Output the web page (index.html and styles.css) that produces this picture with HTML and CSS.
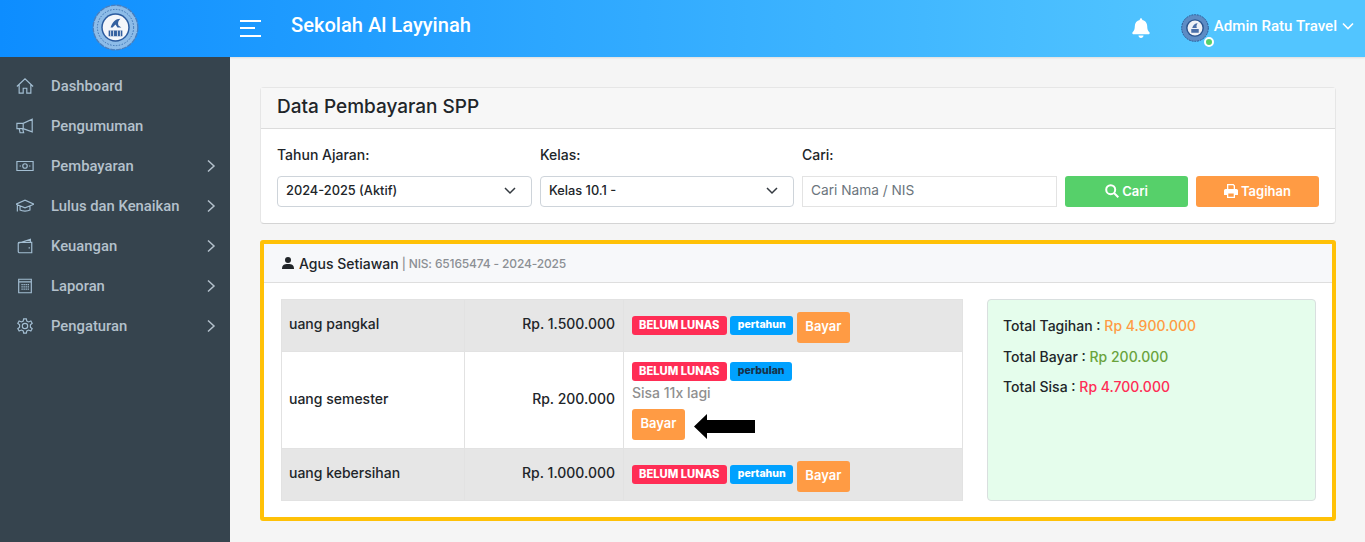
FILE: index.html
```html
<!DOCTYPE html>
<html lang="en">
<head>
    <meta charset="UTF-8">
    <meta name="viewport" content="width=device-width, initial-scale=1.0">
    <title>Sekolah Al Layyinah</title>
    <link rel="stylesheet" href="styles.css">
</head>
<body>

    <header class="topbar">
        <div class="brand">
            <svg class="logo" width="47" height="47" viewBox="0 0 48 48">
                <circle cx="24" cy="24" r="22.800" fill="#8dbce8" stroke="#4a7fbe" stroke-width="1.400" stroke-dasharray="5 1"/>
                <circle cx="24" cy="24" r="18.500" fill="none" stroke="#3a70b0" stroke-width="1" stroke-dasharray="1.500 1.500"/>
                <circle cx="24" cy="24" r="14.500" fill="#2a5a9e"/>
                <circle cx="24" cy="24" r="13" fill="#f4f6fa"/>
                <path d="M17 33v-6h14v6zM19 24c2-6 5-9 10-9-2 2-3 4-2 7l3 2h-4l-2-3-3 3z" fill="#34609f"/>
                <path d="M19 27v6M22 27v6M26 27v6M29 27v6" stroke="#f4f6fa" stroke-width="0.800"/>
            </svg>
        </div>
        <div class="topbar-main">
            <button class="burger" aria-label="menu"><span></span><span class="mid"></span><span></span></button>
            <h1 class="school">Sekolah Al Layyinah</h1>
            <svg class="bell" width="20" height="20" viewBox="0 0 448 512" fill="#fff"><path d="M224 512c35 0 64-29 64-64H160c0 35 29 64 64 64zm215-150c-19-21-56-52-56-154 0-78-54-140-128-155V32a32 32 0 0 0-62 0v21C119 68 65 130 65 208c0 102-37 133-56 154-6 6-9 14-9 22 0 16 13 32 32 32h384c19 0 32-16 32-32 0-8-3-16-9-22z"/></svg>
            <div class="user">
                <span class="avatar">
                    <svg width="28" height="28" viewBox="0 0 30 30">
                        <circle cx="15" cy="15" r="14.300" fill="#5d8cc4" stroke="#2a5590" stroke-dasharray="2 1"/>
                        <circle cx="15" cy="15" r="9.500" fill="#2a5590"/>
                        <circle cx="15" cy="15" r="8" fill="#eef1f6"/>
                        <path d="M11 20v-4h8v4zM12 15c1-3 3-5 6-5-1 1-2 3-1 5z" fill="#4a6fa8"/>
                    </svg>
                    <i class="online"></i>
                </span>
                <span class="user-name">Admin Ratu Travel</span>
                <svg width="12" height="12" viewBox="0 0 12 12" fill="none" stroke="#fff" stroke-width="1.600"><path d="M1 3.500l5 5 5-5"/></svg>
            </div>
        </div>
    </header>

    <div class="layout">
        <nav class="sidebar">
            <a class="nav-item">
                <svg class="nav-icon" viewBox="0 0 20 20"><path d="M1 10.500L10 2 19 10.500M3.500 8.500V18H8V12.500H12V18H16.500V8.500"/></svg>
                <span>Dashboard</span>
            </a>
            <a class="nav-item">
                <svg class="nav-icon" viewBox="0 0 20 20"><path d="M1 7H8L18 2.500V16.500L8 13H1zM8 7V13M3.500 13L4.500 17.500H8.500L7.500 13.500"/></svg>
                <span>Pengumuman</span>
            </a>
            <a class="nav-item">
                <svg class="nav-icon" viewBox="0 0 20 20"><path d="M1 5H19V15H1z"/><circle cx="10" cy="10" r="2.500"/><path d="M4 10H5.500M14.500 10H16"/></svg>
                <span>Pembayaran</span>
                <svg class="nav-arrow" viewBox="0 0 10 14"><path d="M2 1.500L8 7 2 12.500"/></svg>
            </a>
            <a class="nav-item">
                <svg class="nav-icon" viewBox="0 0 20 20"><path d="M0 8L10 3.500 20 8 10 12zM4.500 10V14.500C7 16 13 16 15.500 14.500V10M1.500 9V16"/></svg>
                <span>Lulus dan Kenaikan</span>
                <svg class="nav-arrow" viewBox="0 0 10 14"><path d="M2 1.500L8 7 2 12.500"/></svg>
            </a>
            <a class="nav-item">
                <svg class="nav-icon" viewBox="0 0 20 20"><path d="M2.500 7L16 2.500V6M2.500 7C2.500 6 3.500 6 4 6H17.500V17.500H4C3 17.500 2.500 17 2.500 16zM14 12H15.500"/></svg>
                <span>Keuangan</span>
                <svg class="nav-arrow" viewBox="0 0 10 14"><path d="M2 1.500L8 7 2 12.500"/></svg>
            </a>
            <a class="nav-item">
                <svg class="nav-icon" viewBox="0 0 20 20"><path d="M3 2.500H17V17.500H3zM3 5.500H17"/><path d="M6 8.500H14.500M6 11H14.500M6 13.500H14.500" stroke-dasharray="1.500 0.800"/></svg>
                <span>Laporan</span>
                <svg class="nav-arrow" viewBox="0 0 10 14"><path d="M2 1.500L8 7 2 12.500"/></svg>
            </a>
            <a class="nav-item">
                <svg class="nav-icon" viewBox="0 0 20 20"><circle cx="10" cy="10" r="3"/><path d="M8.500 2H11.500L12 4.500 14 5.500 16.500 4.500 18 7 16 8.700V11.300L18 13 16.500 15.500 14 14.500 12 15.500 11.500 18H8.500L8 15.500 6 14.500 3.500 15.500 2 13 4 11.300V8.700L2 7 3.500 4.500 6 5.500 8 4.500z"/></svg>
                <span>Pengaturan</span>
                <svg class="nav-arrow" viewBox="0 0 10 14"><path d="M2 1.500L8 7 2 12.500"/></svg>
            </a>
        </nav>

        <main class="content">
            <section class="card">
                <div class="card-head">Data Pembayaran SPP</div>
                <form class="filter">
                    <label class="field-label">Tahun Ajaran:</label>
                    <label class="field-label">Kelas:</label>
                    <label class="field-label wide">Cari:</label>
                    <div class="select">2024-2025 (Aktif)
                        <svg width="12" height="8" viewBox="0 0 12 8" fill="none" stroke="#343a40" stroke-width="1.500"><path d="M1 1l5 5 5-5"/></svg>
                    </div>
                    <div class="select">Kelas 10.1 -
                        <svg width="12" height="8" viewBox="0 0 12 8" fill="none" stroke="#343a40" stroke-width="1.500"><path d="M1 1l5 5 5-5"/></svg>
                    </div>
                    <div class="search-input">Cari Nama / NIS</div>
                    <div class="btn btn-green">
                        <svg width="14" height="14" viewBox="0 0 14 14" fill="none" stroke="#fff" stroke-width="2"><circle cx="5.700" cy="5.700" r="4.500"/><path d="M9 9l4.300 4.300"/></svg>
                        Cari
                    </div>
                    <div class="btn btn-orange">
                        <svg width="14" height="14" viewBox="0 0 14 14" fill="#fff"><path d="M3 0h6.500L11 1.500V5H3zM4.300 1.300V5h5.400V2L9 1.300zM1.500 5h11A1.500 1.500 0 0 1 14 6.500V11h-3v3H3v-3H0V6.500A1.500 1.500 0 0 1 1.500 5zM4.300 9.500v3.200h5.400V9.500z" fill-rule="evenodd"/></svg>
                        Tagihan
                    </div>
                </form>
            </section>

            <section class="card card-marked">
                <div class="student-head">
                    <svg width="12" height="12" viewBox="0 0 12 12" fill="#212529"><circle cx="6" cy="3" r="3"/><path d="M0 12c0-4 2-5 6-5s6 1 6 5z"/></svg>
                    <strong>Agus Setiawan</strong> <span class="student-meta">| NIS: 65165474 - 2024-2025</span>
                </div>
                <div class="student-body">
                    <table class="bills">
                        <tr class="odd">
                            <td class="name">uang pangkal</td>
                            <td class="amount">Rp. 1.500.000</td>
                            <td class="status">
                                <span class="badge red">BELUM LUNAS</span>
                                <span class="badge blue">pertahun</span>
                                <span class="pay">Bayar</span>
                            </td>
                        </tr>
                        <tr class="long">
                            <td class="name">uang semester</td>
                            <td class="amount">Rp. 200.000</td>
                            <td class="status">
                                <span class="badge red">BELUM LUNAS</span>
                                <span class="badge blue dark">perbulan</span>
                                <div class="remain">Sisa 11x lagi</div>
                                <div class="pay-row">
                                    <span class="pay">Bayar</span>
                                    <svg class="arrow" width="61" height="25" viewBox="0 0 61 25"><path d="M0 12.500L13 0V6H61V19H13V25z" fill="#000"/></svg>
                                </div>
                            </td>
                        </tr>
                        <tr class="odd">
                            <td class="name">uang kebersihan</td>
                            <td class="amount">Rp. 1.000.000</td>
                            <td class="status">
                                <span class="badge red">BELUM LUNAS</span>
                                <span class="badge blue">pertahun</span>
                                <span class="pay">Bayar</span>
                            </td>
                        </tr>
                    </table>
                    <div class="summary">
                        <p>Total Tagihan : <span class="c-orange">Rp 4.900.000</span></p>
                        <p>Total Bayar : <span class="c-green">Rp 200.000</span></p>
                        <p>Total Sisa : <span class="c-red">Rp 4.700.000</span></p>
                    </div>
                </div>
            </section>
        </main>
    </div>

</body>
</html>
```

FILE: styles.css
```css
* {
    box-sizing: border-box;
}

html, body {
    height: 100%;
    overflow: hidden;
}

body {
    margin: 0;
    font-family: 'Inter', sans-serif;
    font-size: 14px;
    color: #212529;
    background-color: #f5f5f5;
}

.topbar {
    display: flex;
    height: 57px;
    color: #fff;
    background: linear-gradient(to right, #0d8dff, #52c5ff 88%);
    box-shadow: 0 1px 2px rgba(0, 0, 0, 0.1);
}

.brand {
    width: 230px;
    display: flex;
    justify-content: center;
    align-items: center;
    flex-shrink: 0;
    padding-bottom: 2px;
}

.topbar-main {
    flex: 1;
    display: flex;
    align-items: center;
    padding: 0 11px 6px 10px;
}

.burger {
    width: 21px;
    height: 17px;
    padding: 0;
    background: none;
    border: none;
    display: flex;
    flex-direction: column;
    justify-content: space-between;
    margin-top: 5px;
}

.burger span {
    display: block;
    height: 2px;
    width: 21px;
    background-color: #fff;
}

.burger .mid {
    width: 15px;
}

.school {
    margin: 0 0 2px 30px;
    font-family: 'Roboto', sans-serif;
    font-size: 20.100px;
    font-weight: 500;
    flex: 1;
}

.bell {
    margin-right: 30px;
    margin-top: 4px;
}

.user {
    display: flex;
    align-items: center;
    gap: 5px;
    font-family: 'Roboto', sans-serif;
    font-size: 15.100px;
    font-weight: 500;
}

.avatar {
    position: relative;
    width: 28px;
    height: 30px;
    margin-top: 6px;
}

.online {
    position: absolute;
    right: -5px;
    bottom: -3px;
    width: 6px;
    height: 6px;
    background-color: #56d06a;
    border: 2px solid #fff;
    border-radius: 50%;
    box-sizing: content-box;
}

.layout {
    display: flex;
    height: calc(100% - 57px);
}

.sidebar {
    width: 230px;
    flex-shrink: 0;
    padding-top: 9px;
    color: #b4c1cc;
    background-color: #36444e;
}

.nav-item {
    display: flex;
    align-items: center;
    height: 40px;
    padding: 0 14px 0 16px;
    font-family: 'Roboto', sans-serif;
    font-size: 14.800px;
    font-weight: 500;
}

.nav-item span {
    flex: 1;
    margin-left: 17px;
}

.nav-icon {
    width: 18px;
    height: 18px;
    fill: none;
    stroke: #a3bed2;
    stroke-width: 1.300;
}

.nav-arrow {
    width: 10px;
    height: 14px;
    fill: none;
    stroke: #b4c1cc;
    stroke-width: 1.500;
}

.content {
    flex: 1;
    padding: 30px 29px 0 30px;
}

.card {
    background-color: #fff;
    border: 1px solid #e6e6e6;
    border-bottom-color: #d4d4d4;
    border-radius: 4px;
    margin-bottom: 16px;
}

.card-head {
    height: 41px;
    padding: 0 16px;
    font-size: 19px;
    font-weight: 500;
    line-height: 38px;
    background-color: #f7f7f7;
    border-bottom: 1px solid #dcdcdc;
}

.filter {
    display: grid;
    grid-template-columns: 255px 254px 255px 123px 123px;
    column-gap: 8px;
    padding: 16px;
}

.field-label {
    height: 31px;
    line-height: 19px;
    font-weight: 500;
}

.field-label.wide {
    grid-column: 3 / 6;
}

.select {
    display: flex;
    justify-content: space-between;
    align-items: center;
    height: 31px;
    padding: 0 15px 2px 8px;
    font-size: 12.800px;
    font-weight: 500;
    background-color: #fff;
    border: 1px solid #ced4da;
    border-radius: 4px;
}

.search-input {
    height: 31px;
    padding: 0 8px;
    font-size: 13.700px;
    line-height: 26px;
    color: #6c757d;
    border: 1px solid #e3e3e3;
}

.btn {
    display: flex;
    justify-content: center;
    align-items: center;
    gap: 3px;
    height: 31px;
    padding-bottom: 2px;
    font-size: 13px;
    font-weight: 600;
    color: #fff;
    border-radius: 3px;
}

.btn-green {
    background-color: #56d06a;
}

.btn-orange {
    background-color: #ff9b44;
}

.card-marked {
    height: 281px;
    border: 4px solid #ffc107;
    border-radius: 3px;
}

.student-head {
    display: flex;
    align-items: center;
    gap: 5px;
    height: 39px;
    padding: 0 18px;
    font-size: 14px;
    background-color: #f7f8fa;
    border-bottom: 1px solid #dedede;
}

.student-head strong {
    font-weight: 500;
}

.student-meta {
    margin-left: -2px;
    font-size: 12px;
    font-weight: 500;
    letter-spacing: -0.150px;
    color: #8b8f94;
}

.student-body {
    display: flex;
    align-items: flex-start;
    padding: 16px 16px 0 17px;
    gap: 24px;
}

.bills {
    width: 682px;
    flex-shrink: 0;
    border-collapse: collapse;
    table-layout: fixed;
    font-weight: 500;
    font-size: 14px;
}

.bills td {
    border: 1px solid #e2e2e2;
    padding: 0 7px 4px;
}

.bills tr.odd td {
    background-color: #e6e6e6;
    height: 52px;
}

.bills tr.long td {
    height: 97px;
}

.name {
    width: 183px;
}

.bills .amount {
    width: 159px;
    text-align: right;
    padding-right: 8px;
}

.bills .status {
    padding: 0 8px 1px;
    white-space: nowrap;
}

.bills .long .status {
    vertical-align: top;
    padding-top: 9px;
}

.badge {
    display: inline-block;
    height: 19px;
    padding: 0 7.500px;
    font-size: 10.500px;
    font-weight: 800;
    line-height: 18px;
    color: #fff;
    border-radius: 3px;
    vertical-align: middle;
}

.red {
    font-size: 11.200px;
    padding: 0 7px;
    background-color: #ff2d55;
}

.blue {
    background-color: #00a1ff;
}

.blue.dark {
    color: #17324a;
}

.pay {
    display: inline-block;
    width: 53px;
    height: 31px;
    margin-top: 4px;
    font-size: 13px;
    font-weight: 600;
    line-height: 29px;
    text-align: center;
    color: #fff;
    background-color: #ff9b44;
    border-radius: 3px;
    vertical-align: middle;
}

.remain {
    margin-top: 2px;
    color: #8f8f8f;
    font-size: 14px;
    line-height: 20px;
}

.pay-row {
    display: flex;
    align-items: center;
    gap: 9px;
    margin-top: 6px;
}

.pay-row .pay {
    margin-top: 0;
}

.arrow {
    margin-top: 4px;
}

.summary {
    width: 329px;
    height: 202px;
    padding: 17px 15px;
    background-color: #e5fdec;
    border: 1px solid #d9dfdf;
    border-radius: 4px;
    font-weight: 500;
}

.summary p {
    margin: 0 0 13.500px;
    line-height: 17px;
}

.c-orange {
    color: #ff9b44;
}

.c-green {
    color: #6aa33c;
}

.c-red {
    color: #ff2d55;
}
```
